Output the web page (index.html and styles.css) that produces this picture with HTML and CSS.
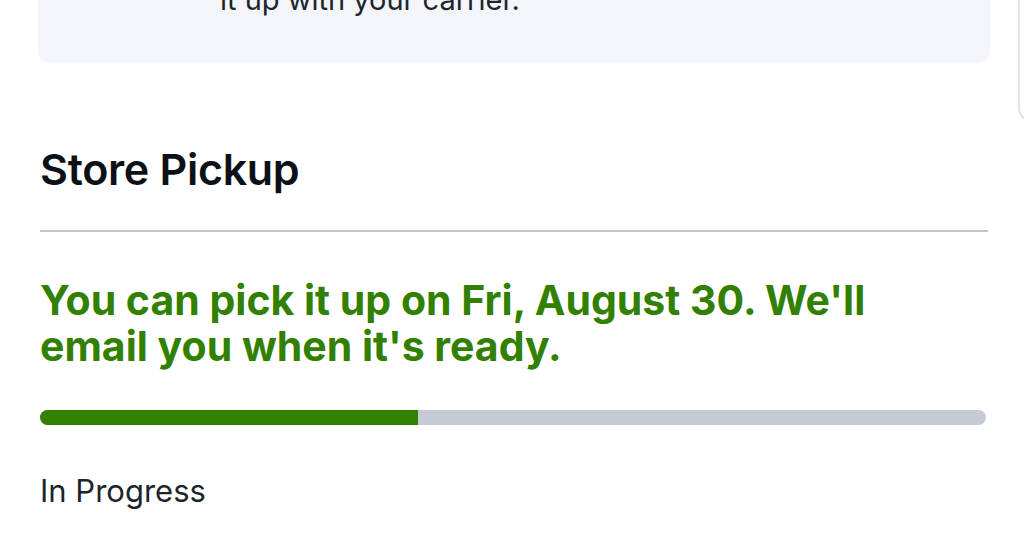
FILE: index.html
```html
<!DOCTYPE html>
<html lang="en">
<head>
    <meta name="viewport" content="width=device-width, initial-scale=1.0" charset="UTF-8">
    <title>Store Pickup</title>
    <link rel="stylesheet" href="styles.css">
</head>
<body>

<div class="page">
    <div class="notice">
        <p class="notice-text">it up with your carrier.</p>
    </div>

    <h2 class="section-title">Store Pickup</h2>

    <p class="status-msg">You can pick it up on Fri, August 30. We'll email you when it's ready.</p>

    <div class="progress">
        <div class="progress-fill" style="width: 40%"></div>
    </div>

    <p class="status-label">In Progress</p>
</div>

<div class="edge"></div>

</body>
</html>
```

FILE: styles.css
```css
body {
    margin: 0;
    font-family: 'Inter', 'Open Sans', sans-serif;
    color: #0d1117;
    background: #fff;
    overflow: hidden;
}

.page {
    width: 948px;
    padding: 0 36px 0 40px;
}

.notice {
    margin: -40px 0 0 -2px;
    width: 952px;
    height: 102px;
    background-color: #f4f5fa;
    border-radius: 0 0 12px 12px;
    box-shadow: 0 1px 2px rgba(0, 0, 0, 0.04);
}

.notice-text {
    margin: 0;
    padding: 22px 0 0 182px;
    font-size: 29px;
    line-height: 36px;
    color: #1d252c;
}

.section-title {
    margin: 81px 0 0;
    padding-bottom: 35px;
    border-bottom: 2px solid #c5c5c5;
    font-size: 43px;
    line-height: 52px;
    font-weight: 600;
    letter-spacing: -0.3px;
}

.status-msg {
    margin: 45px 0 0;
    max-width: 880px;
    font-size: 41px;
    line-height: 46px;
    font-weight: 700;
    color: #318000;
}

.progress {
    margin-top: 41px;
    width: 946px;
    height: 15px;
    border-radius: 8px;
    background-color: #c5cbd5;
    overflow: hidden;
}

.progress-fill {
    height: 100%;
    background-color: #318000;
}

.status-label {
    margin: 48px 0 0;
    font-size: 31px;
    line-height: 36px;
    color: #1d252c;
}

.edge {
    position: absolute;
    top: -20px;
    right: -30px;
    width: 32px;
    height: 138px;
    border: 2px solid #e4e4e4;
    border-radius: 14px;
}
```
